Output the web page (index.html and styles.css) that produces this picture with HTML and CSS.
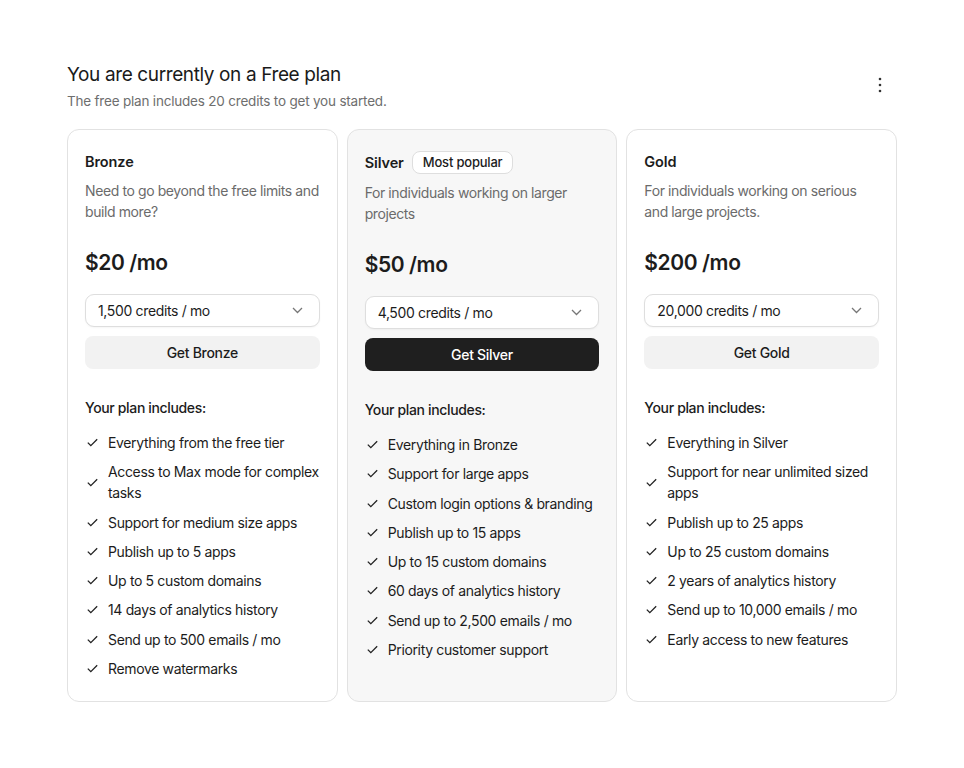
FILE: index.html
```html
<!DOCTYPE html>
<html lang="en">
<head>
<meta charset="utf-8">
<title>Plans</title>
<link rel="stylesheet" href="styles.css">
</head>
<body>
<main class="page">
  <header class="head">
    <div>
      <h1 class="head-title">You are currently on a Free plan</h1>
      <p class="head-sub">The free plan includes 20 credits to get you started.</p>
    </div>
    <button class="more" aria-label="More">
      <svg width="4" height="16" viewBox="0 0 4 16"><circle cx="2" cy="2" r="1.3" fill="#333"/><circle cx="2" cy="8" r="1.3" fill="#333"/><circle cx="2" cy="14" r="1.3" fill="#333"/></svg>
    </button>
  </header>

  <section class="plans">
    <article class="card">
      <div class="card-title-row"><h2 class="card-title">Bronze</h2></div>
      <p class="card-desc">Need to go beyond the free limits and build more?</p>
      <div class="price">$20 /mo</div>
      <div class="select"><span>1,500 credits / mo</span><svg class="chev" width="11" height="7" viewBox="0 0 11 7"><path d="M1 1l4.5 4.5L10 1" fill="none" stroke="#777" stroke-width="1.3"/></svg></div>
      <button class="btn">Get Bronze</button>
      <h3 class="inc">Your plan includes:</h3>
      <ul class="feats">
        <li><svg class="chk" width="11" height="9" viewBox="0 0 11 9"><path d="M0.8 4.6l3 3L10.2 1.2" fill="none" stroke="#222" stroke-width="1.3"/></svg><span>Everything from the free tier</span></li>
        <li><svg class="chk" width="11" height="9" viewBox="0 0 11 9"><path d="M0.8 4.6l3 3L10.2 1.2" fill="none" stroke="#222" stroke-width="1.3"/></svg><span>Access to Max mode for complex tasks</span></li>
        <li><svg class="chk" width="11" height="9" viewBox="0 0 11 9"><path d="M0.8 4.6l3 3L10.2 1.2" fill="none" stroke="#222" stroke-width="1.3"/></svg><span>Support for medium size apps</span></li>
        <li><svg class="chk" width="11" height="9" viewBox="0 0 11 9"><path d="M0.8 4.6l3 3L10.2 1.2" fill="none" stroke="#222" stroke-width="1.3"/></svg><span>Publish up to 5 apps</span></li>
        <li><svg class="chk" width="11" height="9" viewBox="0 0 11 9"><path d="M0.8 4.6l3 3L10.2 1.2" fill="none" stroke="#222" stroke-width="1.3"/></svg><span>Up to 5 custom domains</span></li>
        <li><svg class="chk" width="11" height="9" viewBox="0 0 11 9"><path d="M0.8 4.6l3 3L10.2 1.2" fill="none" stroke="#222" stroke-width="1.3"/></svg><span>14 days of analytics history</span></li>
        <li><svg class="chk" width="11" height="9" viewBox="0 0 11 9"><path d="M0.8 4.6l3 3L10.2 1.2" fill="none" stroke="#222" stroke-width="1.3"/></svg><span>Send up to 500 emails / mo</span></li>
        <li><svg class="chk" width="11" height="9" viewBox="0 0 11 9"><path d="M0.8 4.6l3 3L10.2 1.2" fill="none" stroke="#222" stroke-width="1.3"/></svg><span>Remove watermarks</span></li>
      </ul>
    </article>

    <article class="card card-featured">
      <div class="card-title-row"><h2 class="card-title">Silver</h2><span class="badge">Most popular</span></div>
      <p class="card-desc">For individuals working on larger projects</p>
      <div class="price">$50 /mo</div>
      <div class="select"><span>4,500 credits / mo</span><svg class="chev" width="11" height="7" viewBox="0 0 11 7"><path d="M1 1l4.5 4.5L10 1" fill="none" stroke="#777" stroke-width="1.3"/></svg></div>
      <button class="btn btn-dark">Get Silver</button>
      <h3 class="inc">Your plan includes:</h3>
      <ul class="feats">
        <li><svg class="chk" width="11" height="9" viewBox="0 0 11 9"><path d="M0.8 4.6l3 3L10.2 1.2" fill="none" stroke="#222" stroke-width="1.3"/></svg><span>Everything in Bronze</span></li>
        <li><svg class="chk" width="11" height="9" viewBox="0 0 11 9"><path d="M0.8 4.6l3 3L10.2 1.2" fill="none" stroke="#222" stroke-width="1.3"/></svg><span>Support for large apps</span></li>
        <li><svg class="chk" width="11" height="9" viewBox="0 0 11 9"><path d="M0.8 4.6l3 3L10.2 1.2" fill="none" stroke="#222" stroke-width="1.3"/></svg><span>Custom login options &amp; branding</span></li>
        <li><svg class="chk" width="11" height="9" viewBox="0 0 11 9"><path d="M0.8 4.6l3 3L10.2 1.2" fill="none" stroke="#222" stroke-width="1.3"/></svg><span>Publish up to 15 apps</span></li>
        <li><svg class="chk" width="11" height="9" viewBox="0 0 11 9"><path d="M0.8 4.6l3 3L10.2 1.2" fill="none" stroke="#222" stroke-width="1.3"/></svg><span>Up to 15 custom domains</span></li>
        <li><svg class="chk" width="11" height="9" viewBox="0 0 11 9"><path d="M0.8 4.6l3 3L10.2 1.2" fill="none" stroke="#222" stroke-width="1.3"/></svg><span>60 days of analytics history</span></li>
        <li><svg class="chk" width="11" height="9" viewBox="0 0 11 9"><path d="M0.8 4.6l3 3L10.2 1.2" fill="none" stroke="#222" stroke-width="1.3"/></svg><span>Send up to 2,500 emails / mo</span></li>
        <li><svg class="chk" width="11" height="9" viewBox="0 0 11 9"><path d="M0.8 4.6l3 3L10.2 1.2" fill="none" stroke="#222" stroke-width="1.3"/></svg><span>Priority customer support</span></li>
      </ul>
    </article>

    <article class="card">
      <div class="card-title-row"><h2 class="card-title">Gold</h2></div>
      <p class="card-desc">For individuals working on serious and large projects.</p>
      <div class="price">$200 /mo</div>
      <div class="select"><span>20,000 credits / mo</span><svg class="chev" width="11" height="7" viewBox="0 0 11 7"><path d="M1 1l4.5 4.5L10 1" fill="none" stroke="#777" stroke-width="1.3"/></svg></div>
      <button class="btn">Get Gold</button>
      <h3 class="inc">Your plan includes:</h3>
      <ul class="feats">
        <li><svg class="chk" width="11" height="9" viewBox="0 0 11 9"><path d="M0.8 4.6l3 3L10.2 1.2" fill="none" stroke="#222" stroke-width="1.3"/></svg><span>Everything in Silver</span></li>
        <li><svg class="chk" width="11" height="9" viewBox="0 0 11 9"><path d="M0.8 4.6l3 3L10.2 1.2" fill="none" stroke="#222" stroke-width="1.3"/></svg><span>Support for near unlimited sized apps</span></li>
        <li><svg class="chk" width="11" height="9" viewBox="0 0 11 9"><path d="M0.8 4.6l3 3L10.2 1.2" fill="none" stroke="#222" stroke-width="1.3"/></svg><span>Publish up to 25 apps</span></li>
        <li><svg class="chk" width="11" height="9" viewBox="0 0 11 9"><path d="M0.8 4.6l3 3L10.2 1.2" fill="none" stroke="#222" stroke-width="1.3"/></svg><span>Up to 25 custom domains</span></li>
        <li><svg class="chk" width="11" height="9" viewBox="0 0 11 9"><path d="M0.8 4.6l3 3L10.2 1.2" fill="none" stroke="#222" stroke-width="1.3"/></svg><span>2 years of analytics history</span></li>
        <li><svg class="chk" width="11" height="9" viewBox="0 0 11 9"><path d="M0.8 4.6l3 3L10.2 1.2" fill="none" stroke="#222" stroke-width="1.3"/></svg><span>Send up to 10,000 emails / mo</span></li>
        <li><svg class="chk" width="11" height="9" viewBox="0 0 11 9"><path d="M0.8 4.6l3 3L10.2 1.2" fill="none" stroke="#222" stroke-width="1.3"/></svg><span>Early access to new features</span></li>
      </ul>
    </article>
  </section>
</main>
</body>
</html>
```

FILE: styles.css
```css
* { box-sizing: border-box; }
html, body { margin: 0; padding: 0; background: #fff; }
body {
  font-family: Inter, "Noto Sans", sans-serif;
  color: #1c1c1c;
  -webkit-font-smoothing: antialiased;
}
.page {
  width: 830px;
  margin: 0 auto;
  padding-top: 62px;
}
.head {
  display: flex;
  justify-content: space-between;
  align-items: flex-start;
}
.head-title {
  margin: 0;
  font-size: 19px;
  font-weight: 400;
  line-height: 26px;
  letter-spacing: -0.38px;
  color: #1a1a1a;
}
.head-sub {
  margin: 3px 0 0;
  font-size: 13.5px;
  line-height: 20px;
  color: #6e6e6e;
  letter-spacing: -0.2px;
}
.more {
  border: 0;
  background: none;
  padding: 0;
  margin: 15px 13px 0 0;
  width: 8px;
  height: 16px;
  display: flex;
  justify-content: center;
}
.plans {
  margin-top: 18px;
  display: grid;
  grid-template-columns: repeat(3, 1fr);
  gap: 9px;
}
.card {
  border: 1px solid #e2e2e2;
  border-radius: 12px;
  background: #fff;
  padding: 21px 17px 22px;
  display: flex;
  flex-direction: column;
}
.card-featured { background: #f7f7f7; }
.card-title-row {
  display: flex;
  align-items: center;
  gap: 8px;
  min-height: 21px;
}
.card-title {
  margin: 0;
  font-size: 14.5px;
  font-weight: 600;
  line-height: 21px;
  letter-spacing: -0.1px;
}
.badge {
  display: inline-block;
  font-size: 13px;
  font-weight: 500;
  line-height: 21px;
  padding: 0 10px;
  border: 1px solid #dedede;
  border-radius: 8px;
  background: #fff;
  letter-spacing: -0.2px;
}
.card-desc {
  margin: 8px 0 0;
  font-size: 14px;
  line-height: 21px;
  color: #6b6b6b;
  letter-spacing: -0.4px;
}
.price {
  margin-top: 27px;
  font-size: 21px;
  font-weight: 600;
  line-height: 28px;
  letter-spacing: -0.4px;
}
.select {
  margin-top: 17px;
  height: 33px;
  border: 1px solid #dedede;
  border-radius: 9px;
  background: #fff;
  display: flex;
  align-items: center;
  justify-content: space-between;
  padding: 0 16px 0 12px;
  font-size: 14px;
  letter-spacing: -0.35px;
  box-shadow: 0 1px 2px rgba(0,0,0,0.04);
}
.btn {
  margin-top: 9px;
  height: 33px;
  border: 0;
  border-radius: 8px;
  background: #f2f2f2;
  color: #1c1c1c;
  font-family: inherit;
  font-size: 14px;
  font-weight: 500;
  letter-spacing: -0.3px;
  width: 100%;
}
.btn-dark { background: #1f1f1f; color: #fff; }
.inc {
  margin: 28px 0 0;
  font-size: 14px;
  font-weight: 500;
  line-height: 21px;
  letter-spacing: -0.35px;
}
.feats {
  list-style: none;
  margin: 14px 0 0;
  padding: 0;
  display: flex;
  flex-direction: column;
  gap: 8.3px;
}
.feats li {
  display: flex;
  align-items: center;
  gap: 10px;
  font-size: 14px;
  line-height: 21px;
  letter-spacing: -0.35px;
  padding-left: 2px;
}
.chk { flex: none; }
.chev { flex: none; }
```
